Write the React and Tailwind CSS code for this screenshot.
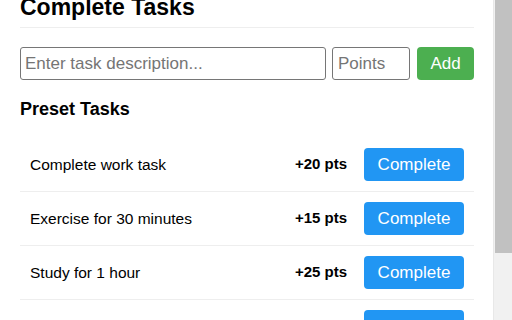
import React, { useState } from "react";

const presetTasks = [
  { id: 1, name: "Complete work task", points: 20 },
  { id: 2, name: "Exercise for 30 minutes", points: 15 },
  { id: 3, name: "Study for 1 hour", points: 25 },
  { id: 4, name: "Read for 20 minutes", points: 10 },
];

const App = () => {
  const [description, setDescription] = useState("");
  const [points, setPoints] = useState("");

  return (
    <div
      className="h-[320px] flex overflow-hidden bg-white text-black"
      style={{ fontFamily: '"Liberation Sans", Arial, sans-serif' }}
    >
      <div className="flex-1 min-w-0 pl-[20px] pr-[19px]">
        <h1 className="mt-[-6px] text-[23px] leading-[26px] font-bold pb-[7px] border-b border-[#eeeeee]">
          Complete Tasks
        </h1>

        {/* Custom task form */}
        <div className="mt-[19px] flex items-center">
          <input
            type="text"
            value={description}
            onChange={(e) => setDescription(e.target.value)}
            placeholder="Enter task description..."
            className="flex-1 min-w-0 h-[33px] px-[4px] text-[17px] border border-[#767676] rounded-[3px] placeholder:text-[#757575] outline-none"
          />
          <input
            type="number"
            value={points}
            onChange={(e) => setPoints(e.target.value)}
            placeholder="Points"
            className="ml-[6px] w-[78px] h-[33px] px-[5px] text-[17px] border border-[#767676] rounded-[3px] placeholder:text-[#757575] outline-none"
          />
          <button className="ml-[7px] w-[57px] h-[33px] bg-[#4caf50] text-white text-[17px] rounded-[4px]">
            Add
          </button>
        </div>

        <h3 className="mt-[19px] mb-[18px] text-[18px] leading-[21px] font-bold">Preset Tasks</h3>

        {/* Preset list */}
        <div>
          {presetTasks.map((task) => (
            <div
              key={task.id}
              className="flex items-center px-[10px] py-[10px] border-b border-[#eeeeee]"
            >
              <span className="flex-1 text-[15.5px]">{task.name}</span>
              <span className="text-[15px] font-bold mr-[17px]">+{task.points} pts</span>
              <button className="w-[100px] h-[33px] bg-[#2196f3] text-white text-[17px] rounded-[4px]">
                Complete
              </button>
            </div>
          ))}
        </div>
      </div>

      {/* Scrollbar */}
      <div className="w-[19px] shrink-0 bg-[#f1f1f1] border-l border-[#e8e8e8] pl-[1px]">
        <div className="h-[253px] bg-[#c1c1c1]" />
      </div>
    </div>
  );
};

export default App;
